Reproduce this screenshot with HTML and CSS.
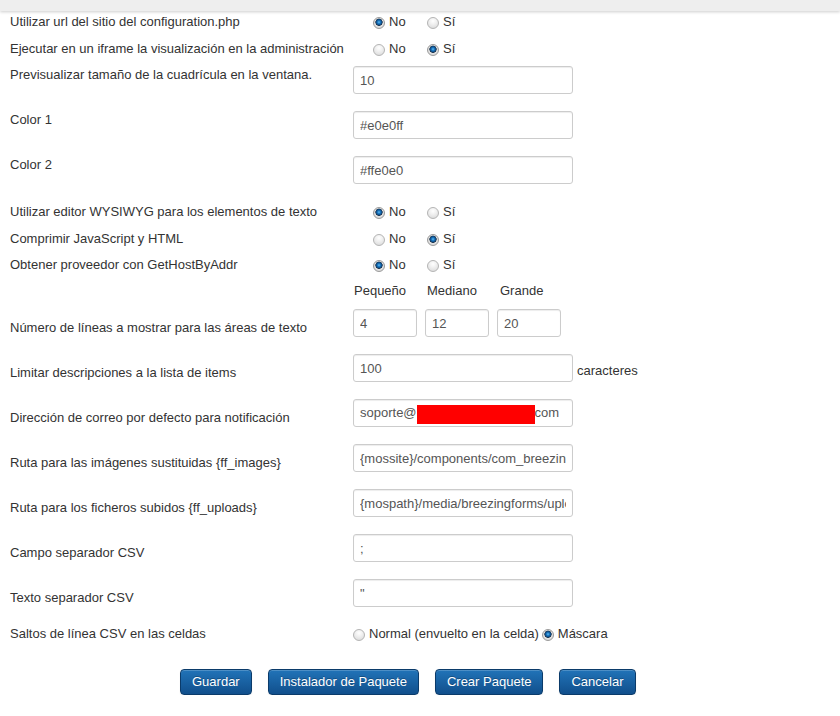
FILE: index.html
```html
<!DOCTYPE html>
<html lang="es">
<head>
<meta charset="utf-8">
<title>Configuración</title>
<link rel="stylesheet" href="styles.css">
</head>
<body>
<div class="topbar"></div>
<div class="form">
  <div class="row radio-row">
    <div class="lbl">Utilizar url del sitio del configuration.php</div>
    <div class="opts indent">
      <label class="opt"><input type="radio" name="r1" checked>No</label>
      <label class="opt"><input type="radio" name="r1">Sí</label>
    </div>
  </div>
  <div class="row radio-row tall">
    <div class="lbl">Ejecutar en un iframe la visualización en la administración</div>
    <div class="opts indent">
      <label class="opt"><input type="radio" name="r2">No</label>
      <label class="opt"><input type="radio" name="r2" checked>Sí</label>
    </div>
  </div>
  <div class="row field-row">
    <div class="lbl">Previsualizar tamaño de la cuadrícula en la ventana.</div>
    <input class="inp" type="text" value="10">
  </div>
  <div class="row field-row">
    <div class="lbl">Color 1</div>
    <input class="inp" type="text" value="#e0e0ff">
  </div>
  <div class="row field-row">
    <div class="lbl">Color 2</div>
    <input class="inp" type="text" value="#ffe0e0">
  </div>
  <div class="row radio-row">
    <div class="lbl">Utilizar editor WYSIWYG para los elementos de texto</div>
    <div class="opts indent">
      <label class="opt"><input type="radio" name="r3" checked>No</label>
      <label class="opt"><input type="radio" name="r3">Sí</label>
    </div>
  </div>
  <div class="row radio-row short">
    <div class="lbl">Comprimir JavaScript y HTML</div>
    <div class="opts indent">
      <label class="opt"><input type="radio" name="r4">No</label>
      <label class="opt"><input type="radio" name="r4" checked>Sí</label>
    </div>
  </div>
  <div class="row radio-row tall">
    <div class="lbl">Obtener proveedor con GetHostByAddr</div>
    <div class="opts indent">
      <label class="opt"><input type="radio" name="r5" checked>No</label>
      <label class="opt"><input type="radio" name="r5">Sí</label>
    </div>
  </div>
  <div class="row head-row">
    <div class="lbl"></div>
    <div class="trio">
      <span class="cell">Pequeño</span>
      <span class="cell">Mediano</span>
      <span class="cell">Grande</span>
    </div>
  </div>
  <div class="row field-row low">
    <div class="lbl">Número de líneas a mostrar para las áreas de texto</div>
    <div class="trio">
      <input class="inp sm" type="text" value="4">
      <input class="inp sm" type="text" value="12">
      <input class="inp sm" type="text" value="20">
    </div>
  </div>
  <div class="row field-row low">
    <div class="lbl">Limitar descripciones a la lista de items</div>
    <div class="with-unit">
      <input class="inp" type="text" value="100">
      <span class="unit">caracteres</span>
    </div>
  </div>
  <div class="row field-row low">
    <div class="lbl">Dirección de correo por defecto para notificación</div>
    <div class="inp fake">soporte@<span class="redact"></span>com</div>
  </div>
  <div class="row field-row low">
    <div class="lbl">Ruta para las imágenes sustituidas {ff_images}</div>
    <input class="inp" type="text" value="{mossite}/components/com_breezingforms/images">
  </div>
  <div class="row field-row low">
    <div class="lbl">Ruta para los ficheros subidos {ff_uploads}</div>
    <input class="inp" type="text" value="{mospath}/media/breezingforms/uploads">
  </div>
  <div class="row field-row low">
    <div class="lbl">Campo separador CSV</div>
    <input class="inp" type="text" value=";">
  </div>
  <div class="row field-row low">
    <div class="lbl">Texto separador CSV</div>
    <input class="inp" type="text" value="&quot;">
  </div>
  <div class="row radio-row last">
    <div class="lbl">Saltos de línea CSV en las celdas</div>
    <div class="opts">
      <label class="opt auto"><input type="radio" name="r6">Normal (envuelto en la celda)</label>
      <label class="opt auto"><input type="radio" name="r6" checked>Máscara</label>
    </div>
  </div>
  <div class="btns">
    <button class="btn" type="button">Guardar</button>
    <button class="btn" type="button">Instalador de Paquete</button>
    <button class="btn" type="button">Crear Paquete</button>
    <button class="btn" type="button">Cancelar</button>
  </div>
</div>
</body>
</html>
```
FILE: styles.css
```css
html, body {
  margin: 0;
  padding: 0;
  background: #fff;
}
body {
  font: 13px/18px "Liberation Sans", Arial, sans-serif;
  color: #333;
}
.topbar {
  height: 11px;
  background: #eeeeee;
  box-shadow: 0 1px 3px rgba(0, 0, 0, 0.2);
}
.form {
  padding-left: 10px;
}
.row {
  display: flex;
  align-items: flex-start;
  box-sizing: border-box;
}
.lbl {
  width: 343px;
  flex: none;
  white-space: nowrap;
}
.radio-row {
  height: 27px;
  padding-top: 2px;
}
.radio-row.tall { height: 28px; }
.radio-row.short { height: 26px; }
.radio-row.last { height: 27px; padding-top: 1px; }
.field-row {
  height: 45px;
}
.field-row.low .lbl {
  padding-top: 10px;
}
.head-row {
  height: 27px;
}
.opts {
  display: flex;
}
.opts.indent {
  padding-left: 20px;
}
.opt {
  display: block;
  width: 54px;
  white-space: nowrap;
}
.opt.auto {
  width: auto;
  margin-right: 3px;
}
.opt input[type="radio"] {
  -webkit-appearance: none;
  appearance: none;
  box-sizing: border-box;
  width: 12px;
  height: 12px;
  margin: 0 4px 0 0;
  vertical-align: -3px;
  border: 1px solid #b4b4b4;
  border-radius: 50%;
  background: radial-gradient(circle at 50% 30%, #ffffff 0, #f0f0f0 40%, #d6d6d6 100%);
}
.opt input[type="radio"]:checked {
  border-color: #9a9a9a;
  background: radial-gradient(circle at 50% 42%, #6cc0f5 0, #1e7fc8 1.3px, #0d4f8c 2.6px, #253a50 3.4px, #e4e4e4 3.9px, #cfcfcf 100%);
}
.inp {
  box-sizing: border-box;
  width: 220px;
  height: 28px;
  margin: 0;
  padding: 4px 6px;
  border: 1px solid #cccccc;
  border-radius: 3px;
  background: #fff;
  color: #555;
  font: 13px/18px "Liberation Sans", Arial, sans-serif;
  box-shadow: inset 0 1px 1px rgba(0, 0, 0, 0.075);
  outline: none;
}
.inp.sm {
  width: 64px;
}
.trio {
  display: flex;
  gap: 8px;
}
.trio .cell {
  width: 64px;
  padding-left: 1px;
}
.with-unit {
  display: flex;
  align-items: flex-end;
}
.unit {
  margin-left: 4px;
  margin-bottom: 2px;
}
.fake {
  display: flex;
  align-items: center;
  padding: 0 6px;
  white-space: nowrap;
  overflow: hidden;
}
.redact {
  display: block;
  flex: none;
  width: 118px;
  height: 19px;
  margin-top: 3px;
  background: #ff0000;
}
.btns {
  display: flex;
  gap: 16px;
  margin-top: 18px;
  padding-left: 170px;
}
.btn {
  box-sizing: border-box;
  height: 26px;
  margin: 0;
  padding: 3px 11px;
  font: 13px/18px "Liberation Sans", Arial, sans-serif;
  color: #fff;
  text-shadow: 0 -1px 0 rgba(0, 0, 0, 0.25);
  border: 1px solid #0b3b6a;
  border-radius: 4px;
  background: linear-gradient(to bottom, #2173b8 0%, #114f8c 100%);
  box-shadow: inset 0 1px 0 rgba(255, 255, 255, 0.2), 0 1px 2px rgba(0, 0, 0, 0.05);
  cursor: pointer;
}
```
